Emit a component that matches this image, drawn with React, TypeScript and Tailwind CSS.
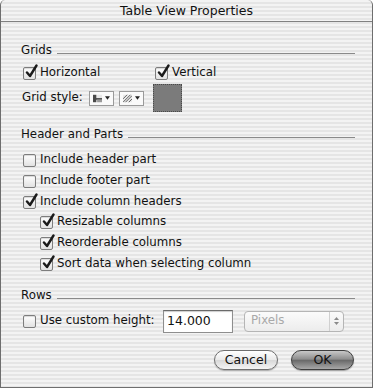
import React from "react";

const font = "font-['DejaVu_Sans','Liberation_Sans',sans-serif]";

function Check({ checked = false }: { checked?: boolean }) {
  return (
    <span className="relative inline-block w-[13px] h-[13px] shrink-0 rounded-[2px] border border-[#7d7d7d] bg-[linear-gradient(to_bottom,#ffffff,#e2e2e2)] shadow-[inset_0_1px_1px_rgba(0,0,0,0.15)]">
      {checked && (
        <svg className="absolute left-[1px] top-[-4px]" width="13" height="15" viewBox="0 0 13 15">
          <path d="M2 8.5 L5 12 L11.5 1.5" fill="none" stroke="#1a1a1a" strokeWidth="2.4" strokeLinecap="round" strokeLinejoin="round" />
        </svg>
      )}
    </span>
  );
}

function CheckRow({ label, checked = false, indent = false, className = "" }: { label: string; checked?: boolean; indent?: boolean; className?: string }) {
  return (
    <div className={`flex items-center h-4 gap-[4px] ${indent ? "pl-[17px]" : ""} ${className}`}>
      <Check checked={checked} />
      <span>{label}</span>
    </div>
  );
}

function SectionHead({ title, className = "" }: { title: string; className?: string }) {
  return (
    <div className={`flex items-center h-4 gap-[5px] pr-[17px] ${className}`}>
      <span>{title}</span>
      <span className="flex-1 h-px bg-[#8a8a8a] mt-[5px]" />
    </div>
  );
}

function MiniPopup({ kind }: { kind: "lines" | "hatch" }) {
  return (
    <span className="flex items-center gap-[3px] w-[25px] h-[15px] border border-[#9a9a9a] bg-[#fafafa] px-[3px]">
      {kind === "lines" ? (
        <svg width="11" height="9" viewBox="0 0 11 9">
          <rect x="0" y="0" width="11" height="9" fill="#e8e8e8" />
          <rect x="0" y="0" width="4" height="9" fill="#4a4a4a" />
          <rect x="0" y="4" width="11" height="2" fill="#4a4a4a" />
          <rect x="5" y="6" width="6" height="3" fill="#9a9a9a" />
        </svg>
      ) : (
        <svg width="11" height="9" viewBox="0 0 11 9">
          <rect x="0" y="0" width="11" height="9" fill="#e8e8e8" />
          <path d="M0 5 L5 0 M0 9 L9 0 M3 9 L11 1 M7 9 L11 5" stroke="#444" strokeWidth="1" />
        </svg>
      )}
      <svg width="6" height="4" viewBox="0 0 6 4">
        <path d="M0 0 L6 0 L3 4 Z" fill="#222" />
      </svg>
    </span>
  );
}

export default function App() {
  return (
    <div className={`w-[375px] h-[389px] bg-white ${font} text-[11.8px] text-[#111] overflow-hidden`}>
      <div className="w-[373px] h-[388px] flex flex-col border-l border-r border-b border-[#6e6e6e] rounded-t-[5px] bg-[repeating-linear-gradient(to_bottom,#f3f3f3_0px,#f3f3f3_2px,#e5e5e5_2px,#e5e5e5_4px)]">
        <div className="h-[22px] shrink-0 flex items-center justify-center border-b border-[#808080] text-[12.5px] pt-[1px]">
          Table View Properties
        </div>

        <div className="flex flex-col pl-[20px]">
          <SectionHead title="Grids" className="mt-[21px]" />
          <div className="flex items-center h-4 mt-[6px] pl-[2px]">
            <CheckRow label="Horizontal" checked className="w-[132px]" />
            <CheckRow label="Vertical" checked />
          </div>
          <div className="flex items-center h-[28px] mt-[3px] pl-[1px]">
            <span className="w-[67px]">Grid style:</span>
            <MiniPopup kind="lines" />
            <span className="w-[5px]" />
            <MiniPopup kind="hatch" />
            <span className="w-[9px]" />
            <span className="w-[29px] h-[28px] bg-[#7b7b7b] border border-dotted border-[#4a4a4a]" />
          </div>

          <SectionHead title="Header and Parts" className="mt-[15px]" />
          <div className="flex flex-col pl-[2px]">
            <CheckRow label="Include header part" className="mt-[9px]" />
            <CheckRow label="Include footer part" className="mt-[5px]" />
            <CheckRow label="Include column headers" checked className="mt-[5px]" />
            <CheckRow label="Resizable columns" checked indent className="mt-[4px]" />
            <CheckRow label="Reorderable columns" checked indent className="mt-[5px]" />
            <CheckRow label="Sort data when selecting column" checked indent className="mt-[5px]" />
          </div>

          <SectionHead title="Rows" className="mt-[16px]" />
          <div className="flex items-center h-[24px] mt-[5px] pl-[2px]">
            <CheckRow label="Use custom height:" className="w-[140px]" />
            <span className="w-[70px] h-[23px] flex items-center pl-[3px] text-[12.5px] bg-white border border-[#8e8e8e] border-t-[#6a6a6a] shadow-[inset_0_1px_1px_rgba(0,0,0,0.2)]">
              14.000
            </span>
            <span className="ml-[11px] w-[100px] h-[21px] flex items-center rounded-[4px] border border-[#b5b5b5] bg-[linear-gradient(to_bottom,#fbfbfb,#ececec)]">
              <span className="flex-1 pl-[6px] text-[#a9a9a9]">Pixels</span>
              <span className="w-[14px] h-full flex flex-col items-center justify-center gap-[2px] border-l border-[#d0d0d0]">
                <svg width="5" height="3" viewBox="0 0 5 3"><path d="M0 3 L5 3 L2.5 0 Z" fill="#8a8a8a" /></svg>
                <svg width="5" height="3" viewBox="0 0 5 3"><path d="M0 0 L5 0 L2.5 3 Z" fill="#8a8a8a" /></svg>
              </span>
            </span>
          </div>

          <div className="flex justify-end gap-[13px] pr-[18px] mt-[17px]">
            <span className="w-[64px] h-[20px] flex items-center justify-center rounded-full border border-[#6f6f6f] bg-[linear-gradient(to_bottom,#ffffff_0%,#e9e9e9_50%,#d8d8d8_51%,#f4f4f4_100%)] shadow-[0_1px_1px_rgba(0,0,0,0.25)] text-[12.5px]">
              Cancel
            </span>
            <span className="w-[63px] h-[20px] flex items-center justify-center rounded-full border border-[#3e3e3e] bg-[linear-gradient(to_bottom,#c8c8c8_0%,#8e8e8e_45%,#6a6a6a_52%,#a8a8a8_100%)] shadow-[0_1px_1px_rgba(0,0,0,0.3)] text-[12.5px] text-[#111]">
              OK
            </span>
          </div>
        </div>
      </div>
    </div>
  );
}
